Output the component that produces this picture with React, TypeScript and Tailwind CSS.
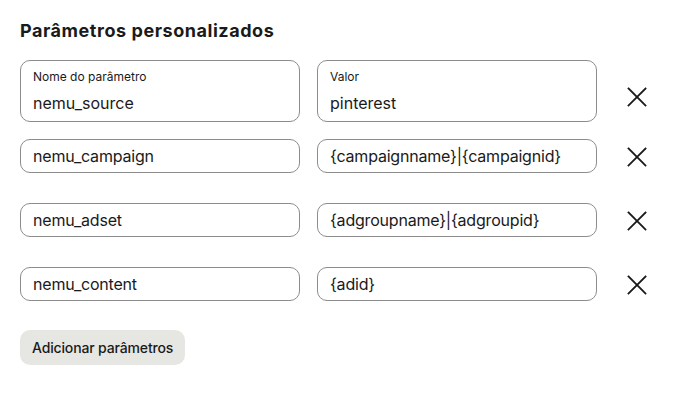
import React from 'react';

type Param = { name: string; value: string };

const PARAMS: Param[] = [
  { name: 'nemu_source', value: 'pinterest' },
  { name: 'nemu_campaign', value: '{campaignname}|{campaignid}' },
  { name: 'nemu_adset', value: '{adgroupname}|{adgroupid}' },
  { name: 'nemu_content', value: '{adid}' },
];

const CloseIcon = () => (
  <svg width="20" height="20" viewBox="0 0 20 20" fill="none" stroke="#1a1a1a" strokeWidth="1.8" strokeLinecap="square">
    <line x1="1.5" y1="1.5" x2="18.5" y2="18.5" />
    <line x1="18.5" y1="1.5" x2="1.5" y2="18.5" />
  </svg>
);

const Field = ({ label, value }: { label?: string; value: string }) => {
  if (label) {
    return (
      <div className="w-[280px] h-[62px] rounded-[10px] border border-[#8c8c8c] px-3 pt-[9px]">
        <div className="text-[12px] leading-[14px] text-[#1a1a1a]">{label}</div>
        <div className="mt-[9px] text-[16px] leading-[20px] text-[#1a1a1a]">{value}</div>
      </div>
    );
  }
  return (
    <div className="w-[280px] h-[34px] rounded-[10px] border border-[#8c8c8c] px-3 flex items-center">
      <span className="text-[16px] leading-[20px] tracking-[-0.2px] text-[#1a1a1a]">{value}</span>
    </div>
  );
};

export default function App() {
  return (
    <div className="w-[700px] h-[409px] bg-white px-5 pt-[19px] font-['Inter',sans-serif] text-[#1a1a1a]">
      <h2 className="text-[18px] leading-[24px] font-bold tracking-[0.55px]">Parâmetros personalizados</h2>

      <div className="mt-[17px] flex flex-col">
        {PARAMS.map((p, i) => (
          <div key={p.name} className={`flex items-center gap-[17px] ${i === 0 ? '' : i === 1 ? 'mt-[17px]' : 'mt-[30px]'}`}>
            <Field label={i === 0 ? 'Nome do parâmetro' : undefined} value={p.name} />
            <Field label={i === 0 ? 'Valor' : undefined} value={p.value} />
            <div className={`ml-[13px] w-[20px] flex ${i === 0 ? 'mt-[12px]' : 'mt-[2px]'}`}>
              <CloseIcon />
            </div>
          </div>
        ))}
      </div>

      <button className="mt-[29px] h-[35px] px-3 rounded-[10px] bg-[#e6e6e2] text-[14px] font-medium tracking-[-0.15px] text-[#1a1a1a]">
        Adicionar parâmetros
      </button>
    </div>
  );
}
